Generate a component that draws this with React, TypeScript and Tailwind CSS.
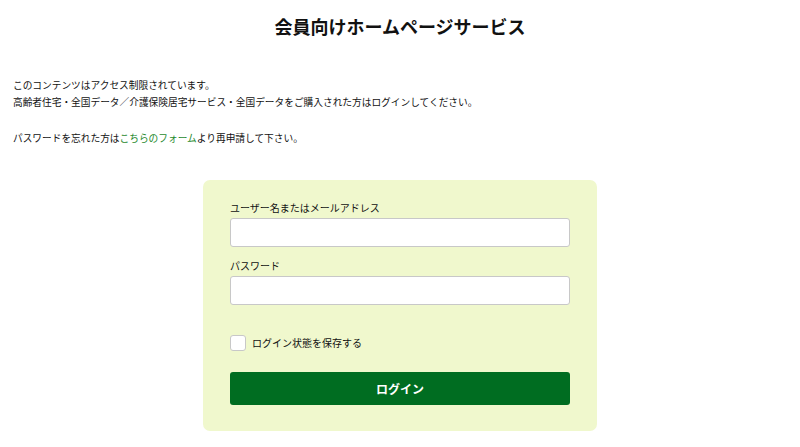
export default function App() {
  return (
    <div className="w-[800px] h-[447px] bg-white text-[#111] overflow-hidden" style={{ fontFamily: '"Noto Sans CJK JP", "Noto Sans", sans-serif' }}>
      <h1 className="pt-[12px] text-center text-[18px] font-bold leading-[28px]">会員向けホームページサービス</h1>
      <div className="mt-[37px] px-[13px] text-[9.7px] leading-[17px]">
        <p>このコンテンツはアクセス制限されています。</p>
        <p>高齢者住宅・全国データ／介護保険居宅サービス・全国データをご購入された方はログインしてください。</p>
        <p className="mt-[19px]">
          パスワードを忘れた方は<span className="text-[#1f8a2e]">こちらのフォーム</span>より再申請して下さい。
        </p>
      </div>
      <div className="mx-auto mt-[33px] w-[394px] rounded-[7px] bg-[#f0f8cd] px-[27px] pt-[19px] pb-[26px]">
        <label className="block text-[10px] leading-[17px]">ユーザー名またはメールアドレス</label>
        <input className="mt-[2px] block h-[29px] w-[340px] rounded-[3px] border border-[#c8c8c8] bg-white" />
        <label className="mt-[10px] block text-[10px] leading-[17px]">パスワード</label>
        <input type="password" className="mt-[2px] block h-[29px] w-[340px] rounded-[3px] border border-[#c8c8c8] bg-white" />
        <div className="mt-[29px] flex items-center gap-[6px]">
          <span className="block h-[16px] w-[16px] rounded-[3px] border border-[#c8c8c8] bg-white" />
          <span className="text-[10px] leading-[17px]">ログイン状態を保存する</span>
        </div>
        <button className="mt-[21px] block h-[33px] w-[340px] rounded-[3px] bg-[#006d21] text-[12px] font-bold text-white">ログイン</button>
      </div>
    </div>
  );
}
